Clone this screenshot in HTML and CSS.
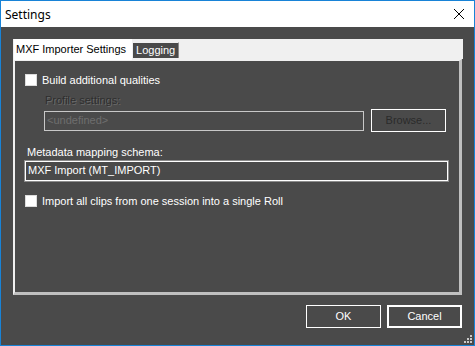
FILE: index.html
```html
<!DOCTYPE html>
<html lang="en">
<head>
  <meta charset="UTF-8">
  <title>Settings</title>
  <link rel="stylesheet" href="styles.css">
</head>
<body>
  <div class="window">
    <div class="titlebar">
      <span class="title">Settings</span>
      <svg class="close" width="12" height="12" viewBox="0 0 12 12">
        <path d="M1 1 L11 11 M11 1 L1 11" stroke="#000" stroke-width="1" fill="none"/>
      </svg>
    </div>
    <div class="client">
      <div class="tabstrip">
        <div class="tab active">MXF Importer Settings</div>
        <div class="tab">Logging</div>
      </div>
      <div class="panel">
        <label class="check">
          <span class="box"></span>
          <span>Build additional qualities</span>
        </label>

        <div class="label disabled indent">Profile settings:</div>
        <div class="row">
          <div class="textbox disabled-box">&lt;undefined&gt;</div>
          <div class="button browse">Browse...</div>
        </div>

        <div class="label schema-label">Metadata mapping schema:</div>
        <div class="textbox wide">MXF Import (MT_IMPORT)</div>

        <label class="check roll">
          <span class="box"></span>
          <span>Import all clips from one session into a single Roll</span>
        </label>
      </div>
      <div class="buttons">
        <div class="button">OK</div>
        <div class="button default">Cancel</div>
      </div>
      <svg class="grip" width="10" height="10" viewBox="0 0 10 10">
        <rect x="7" y="1" width="2" height="2" fill="#c8c8c8"/>
        <rect x="4" y="4" width="2" height="2" fill="#c8c8c8"/>
        <rect x="7" y="4" width="2" height="2" fill="#c8c8c8"/>
        <rect x="1" y="7" width="2" height="2" fill="#c8c8c8"/>
        <rect x="4" y="7" width="2" height="2" fill="#c8c8c8"/>
        <rect x="7" y="7" width="2" height="2" fill="#c8c8c8"/>
      </svg>
    </div>
  </div>
</body>
</html>
```

FILE: styles.css
```css
body {
  margin: 0;
  padding: 0;
  font-family: "Liberation Sans", Arial, sans-serif;
  font-size: 11px;
  background-color: #4a4a4a;
}

.window {
  width: 475px;
  height: 346px;
  box-sizing: border-box;
  border: 1px solid #1883d7;
  display: flex;
  flex-direction: column;
  background: #4a4a4a;
}

.titlebar {
  height: 26px;
  background: #fff;
  display: flex;
  align-items: center;
  padding: 0 8px 0 4px;
}

.title {
  font-family: "Noto Sans", sans-serif;
  font-size: 12px;
  color: #000;
  flex: 1;
}

.close {
  margin-right: 1px;
}

.client {
  flex: 1;
  display: flex;
  flex-direction: column;
  padding: 12px 12px 0 12px;
  position: relative;
  color: #fff;
}

.tabstrip {
  height: 20px;
  background: #f0f0f0;
  display: flex;
  align-items: flex-end;
  padding-left: 1px;
  margin-right: -1px;
}

.tab {
  box-sizing: border-box;
  height: 16px;
  line-height: 14px;
  padding: 0 3px;
  margin-bottom: 1px;
  background: #4a4a4a;
  color: #fff;
  border: 1px solid #f0f0f0;
  border-right-color: #8a8a8a;
  border-bottom: none;
}

.tab.active {
  height: 21px;
  line-height: 20px;
  margin-bottom: -1px;
  padding: 0 6px 0 2px;
  background: #fff;
  color: #000;
  border: none;
  position: relative;
}

.panel {
  height: 236px;
  box-sizing: border-box;
  border: 2px solid #f0f0f0;
  border-right: 3px solid #c0c0c0;
  border-bottom: 3px solid #c0c0c0;
  padding: 13px 10px 0 10px;
}

.check {
  display: flex;
  align-items: center;
  gap: 5px;
  height: 12px;
  line-height: 12px;
}

.box {
  width: 12px;
  height: 12px;
  box-sizing: border-box;
  background: #fff;
  border: 1px solid #dcdcdc;
}

.label {
  line-height: 13px;
}

.disabled {
  color: #2e2e2e;
  text-shadow: 1px 1px 0 #6a6a6a;
}

.indent {
  margin: 8px 0 0 20px;
}

.row {
  display: flex;
  align-items: center;
  gap: 7px;
  margin: 2px 0 0 19px;
}

.textbox {
  box-sizing: border-box;
  height: 20px;
  line-height: 17px;
  padding: 0 2px;
  border: 1px solid #fff;
  box-shadow: 0 0 0 1px #8c8c8c;
  color: #fff;
}

.disabled-box {
  width: 320px;
  border-color: #c8c8c8;
  box-shadow: none;
  color: #6e6e6e;
}

.wide {
  width: 423px;
  margin-top: 2px;
}

.schema-label {
  margin-top: 14px;
  margin-left: 2px;
}

.roll {
  margin-top: 14px;
}

.button {
  box-sizing: border-box;
  width: 75px;
  height: 23px;
  line-height: 21px;
  text-align: center;
  border: 1px solid #fff;
  color: #fff;
}

.browse {
  color: #2a2a2a;
}

.buttons {
  display: flex;
  justify-content: flex-end;
  gap: 6px;
  margin-top: 10px;
}

.button.default {
  border-width: 2px;
  line-height: 19px;
}

.grip {
  position: absolute;
  right: 1px;
  bottom: 1px;
}
```
